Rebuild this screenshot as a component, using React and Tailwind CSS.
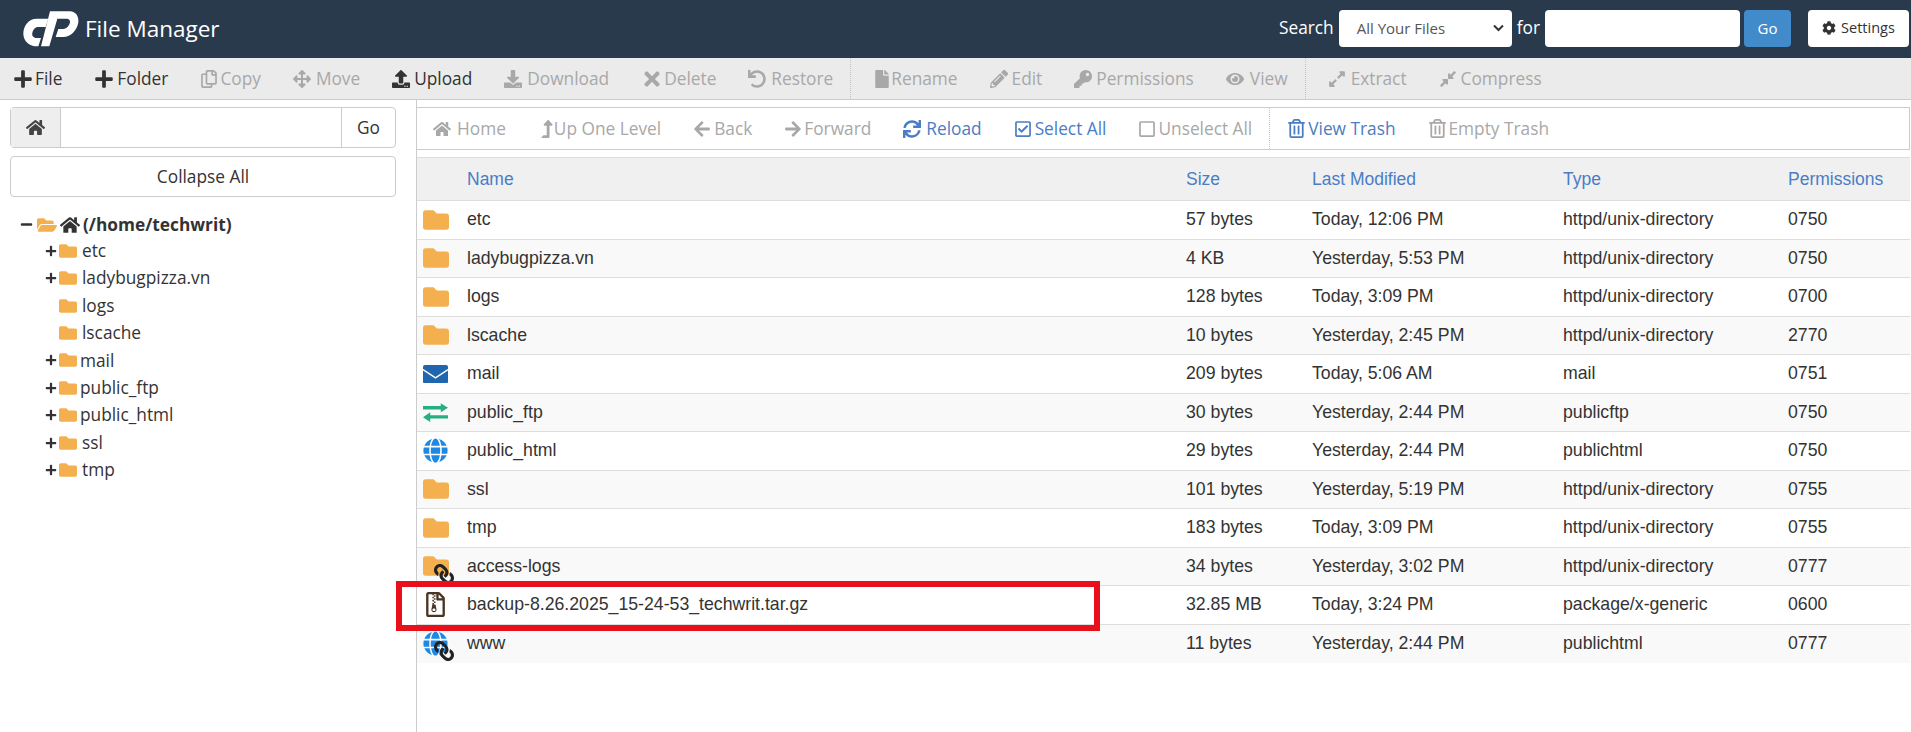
import {
    FaPlus,
    FaRegCopy,
    FaArrowsAlt,
    FaUpload,
    FaDownload,
    FaTimes,
    FaUndo,
    FaFile,
    FaPencilAlt,
    FaKey,
    FaEye,
    FaExpandAlt,
    FaCompressAlt,
    FaHome,
    FaLevelUpAlt,
    FaArrowLeft,
    FaArrowRight,
    FaSync,
    FaRegCheckSquare,
    FaRegSquare,
    FaRegTrashAlt,
    FaCog,
    FaFolder,
    FaFolderOpen,
    FaMinus,
    FaGlobe,
    FaLink,
    FaRegFileArchive,
} from "react-icons/fa"

const topTools = [
    {
        lead: "pl-[13px]",
        items: [
            { icon: FaPlus, h: "h-[20px]", label: "File", on: true },
            { icon: FaPlus, h: "h-[20px]", label: "Folder", on: true, slot: "w-[23px]" },
            { icon: FaRegCopy, label: "Copy", slot: "w-[20px]" },
            { icon: FaArrowsAlt, label: "Move", slot: "w-[23px]" },
            { icon: FaUpload, label: "Upload", on: true },
            { icon: FaDownload, label: "Download", slot: "w-[23px]" },
            { icon: FaTimes, h: "h-[22px]", label: "Delete", slot: "w-[23px]" },
            { icon: FaUndo, label: "Restore", slot: "w-[23px]" },
        ],
    },
    {
        lead: "pl-[22px]",
        items: [
            { icon: FaFile, label: "Rename", slot: "w-[18px]" },
            { icon: FaPencilAlt, label: "Edit" },
            { icon: FaKey, label: "Permissions" },
            { icon: FaEye, h: "h-[18px]", label: "View", slot: "w-[24px]" },
        ],
    },
    {
        lead: "pl-[22px]",
        items: [
            { icon: FaExpandAlt, label: "Extract", slot: "w-[23px]" },
            { icon: FaCompressAlt, label: "Compress" },
        ],
    },
]

const navTools = [
    {
        lead: "pl-[16px]",
        items: [
            { icon: FaHome, label: "Home", slot: "w-[24px]" },
            { icon: FaLevelUpAlt, label: "Up One Level", slot: "w-[16px]" },
            { icon: FaArrowLeft, label: "Back", slot: "w-[21px]" },
            { icon: FaArrowRight, label: "Forward", slot: "w-[20px]" },
            { icon: FaSync, label: "Reload", blue: true, slot: "w-[23px]" },
            { icon: FaRegCheckSquare, label: "Select All", blue: true, slot: "w-[21px]" },
            { icon: FaRegSquare, label: "Unselect All", slot: "w-[20px]" },
        ],
    },
    {
        lead: "pl-[17px]",
        items: [
            { icon: FaRegTrashAlt, h: "h-[19px]", label: "View Trash", blue: true, slot: "w-[21px]" },
            { icon: FaRegTrashAlt, h: "h-[19px]", label: "Empty Trash", slot: "w-[21px]" },
        ],
    },
]

const tree = [
    { name: "etc", plus: true },
    { name: "ladybugpizza.vn", plus: true },
    { name: "logs" },
    { name: "lscache" },
    { name: "mail", plus: true, tight: true },
    { name: "public_ftp", plus: true, tight: true },
    { name: "public_html", plus: true, tight: true },
    { name: "ssl", plus: true },
    { name: "tmp", plus: true },
]

const files = [
    { name: "etc", size: "57 bytes", date: "Today, 12:06 PM", type: "httpd/unix-directory", perm: "0750", kind: "folder" },
    { name: "ladybugpizza.vn", size: "4 KB", date: "Yesterday, 5:53 PM", type: "httpd/unix-directory", perm: "0750", kind: "folder" },
    { name: "logs", size: "128 bytes", date: "Today, 3:09 PM", type: "httpd/unix-directory", perm: "0700", kind: "folder" },
    { name: "lscache", size: "10 bytes", date: "Yesterday, 2:45 PM", type: "httpd/unix-directory", perm: "2770", kind: "folder" },
    { name: "mail", size: "209 bytes", date: "Today, 5:06 AM", type: "mail", perm: "0751", kind: "mail" },
    { name: "public_ftp", size: "30 bytes", date: "Yesterday, 2:44 PM", type: "publicftp", perm: "0750", kind: "ftp" },
    { name: "public_html", size: "29 bytes", date: "Yesterday, 2:44 PM", type: "publichtml", perm: "0750", kind: "globe" },
    { name: "ssl", size: "101 bytes", date: "Yesterday, 5:19 PM", type: "httpd/unix-directory", perm: "0755", kind: "folder" },
    { name: "tmp", size: "183 bytes", date: "Today, 3:09 PM", type: "httpd/unix-directory", perm: "0755", kind: "folder" },
    { name: "access-logs", size: "34 bytes", date: "Yesterday, 3:02 PM", type: "httpd/unix-directory", perm: "0777", kind: "folder", link: true },
    { name: "backup-8.26.2025_15-24-53_techwrit.tar.gz", size: "32.85 MB", date: "Today, 3:24 PM", type: "package/x-generic", perm: "0600", kind: "archive" },
    { name: "www", size: "11 bytes", date: "Yesterday, 2:44 PM", type: "publichtml", perm: "0777", kind: "globe", link: true },
]

function Logo() {
    return (
        <svg width="56" height="36" viewBox="24 24 168 108" className="shrink-0">
            <path
                fill="#fff"
                d="M100 47 L65 47 C40 47 25 70 25 92 C25 115 45 130 65 130 L70 130 L78 105 L65 105 C55 105 50 98 52 90 C54 80 60 72 70 72 L92 72 Z"
            />
            <path
                fill="#fff"
                d="M105 25 L165 25 C182 25 192 40 190 58 C186 85 165 102 145 102 L122 102 L130 78 L145 78 C155 78 163 68 165 58 C166 50 160 47 155 47 L127 47 L103 130 L78 130 Z"
            />
        </svg>
    )
}

function ToolGroup({ group, first }) {
    const border = first ? "" : "border-l border-dotted border-[#c4c4c4]"
    return (
        <div className={`flex items-center h-full gap-[32px] pr-[17px] ${group.lead} ${border}`}>
            {group.items.map((item) => {
                const Icon = item.icon
                let color = "text-[#a8a8a8]"
                if (item.on) color = "text-[#333]"
                if (item.blue) color = "text-[#4a7dc4]"
                return (
                    <div key={item.label} className={`flex items-center ${color}`}>
                        <div className={`${item.slot || "w-[22px]"} shrink-0`}>
                            <Icon className={`w-auto ${item.h || "h-[18px]"}`} />
                        </div>
                        <span>{item.label}</span>
                    </div>
                )
            })}
        </div>
    )
}

function RowIcon({ kind, link }) {
    return (
        <div className="relative w-[26px] h-[25px] flex items-center">
            {kind === "folder" && <FaFolder size={26} className="text-[#f4b04f]" />}
            {kind === "mail" && (
                <svg width="25" height="18.5" viewBox="0 0 25 18.5">
                    <rect width="25" height="18.5" rx="2" fill="#1f66ae" />
                    <path d="M0 4.5 L12.5 12.8 L25 4.5" fill="none" stroke="#fff" strokeWidth="1.5" />
                </svg>
            )}
            {kind === "ftp" && (
                <svg width="25" height="19" viewBox="0 0 76 57" fill="#27ae82">
                    <path d="M0 9 H54 V0 L76 14 L54 28 V19 H0 Z" />
                    <path d="M76 37 H22 V28 L0 43 L22 57 V47 H76 Z" />
                </svg>
            )}
            {kind === "globe" && <FaGlobe size={25} className="text-[#1e88e5]" />}
            {kind === "archive" && <FaRegFileArchive className="w-auto h-[25px] text-[#4a3423]" />}
            {link && (
                <div className="absolute right-[-5px] bottom-[-5px]">
                    <FaLink size={20} className="text-[#222] -scale-x-100" />
                </div>
            )}
        </div>
    )
}

function App() {
    return (
        <div className="relative h-screen overflow-hidden bg-white font-['Open_Sans',sans-serif] text-[17.3px] text-[#333]">
            <header className="h-[58px] bg-[#2a3a4d] flex items-center pl-[23px] pr-[2px]">
                <Logo />
                <h1 className="ml-[6px] text-[22.5px] text-white">File Manager</h1>

                <div className="ml-auto mb-[2px] flex items-center text-white">
                    <span className="mr-[5px]">Search</span>
                    <div className="w-[173px] h-[37px] bg-white rounded flex items-center justify-between pl-[18px] pr-[8px] text-[#555] text-[15px]">
                        <span>All Your Files</span>
                        <svg width="11" height="8" viewBox="0 0 11 8" fill="none" stroke="#333" strokeWidth="2">
                            <path d="M1 1.5 L5.5 6 L10 1.5" />
                        </svg>
                    </div>
                    <span className="mx-[5px]">for</span>
                    <div className="w-[195px] h-[37px] bg-white rounded" />
                    <div className="ml-[4px] w-[47px] h-[37px] bg-[#428bca] rounded-sm flex items-center justify-center text-[15px]">
                        Go
                    </div>
                    <div className="ml-[17px] w-[101px] h-[37px] bg-white rounded-sm flex items-center justify-center gap-[5px] text-[#333] text-[14.5px]">
                        <FaCog size={14} />
                        Settings
                    </div>
                </div>
            </header>

            <div className="h-[42px] bg-[#ebebeb] border-b border-[#ccc] flex items-center">
                {topTools.map((group, i) => (
                    <ToolGroup key={i} group={group} first={i === 0} />
                ))}
            </div>

            <main className="flex h-[632px]">
                <aside className="w-[416px] shrink-0 pl-[10px] pr-[20px] pt-[7px]">
                    <div className="h-[41px] flex border border-[#ccc] rounded-sm">
                        <div className="w-[50px] bg-[#eee] border-r border-[#ccc] flex items-center justify-center">
                            <FaHome size={19} className="text-[#444]" />
                        </div>
                        <div className="flex-1" />
                        <div className="w-[54px] border-l border-[#ccc] flex items-center justify-center">Go</div>
                    </div>
                    <div className="mt-[8px] h-[41px] border border-[#ccc] rounded-sm flex items-center justify-center">
                        Collapse All
                    </div>

                    <div className="mt-[15px] pl-[10px]">
                        <div className="h-[25px] flex items-center font-bold">
                            <FaMinus className="w-auto h-[13px] text-[#333]" />
                            <FaFolderOpen className="w-auto h-[20px] ml-[4px] text-[#f4b04f]" />
                            <FaHome className="w-auto h-[20px] ml-[3px] text-[#333]" />
                            <span className="ml-[3px]">(/home/techwrit)</span>
                        </div>
                        {tree.map((item) => (
                            <div key={item.name} className="h-[27.45px] flex items-center pl-[25px]">
                                <div className="w-[11px]">{item.plus && <FaPlus size={12} />}</div>
                                <FaFolder size={18} className="ml-[3px] text-[#f4b04f]" />
                                <span className={item.tight ? "ml-[3px]" : "ml-[5px]"}>{item.name}</span>
                            </div>
                        ))}
                    </div>
                </aside>

                <section className="flex-1 border-l border-[#ccc] pr-[1px] pt-[7px] font-['Liberation_Sans',sans-serif] text-[17.7px]">
                    <div className="h-[43px] flex items-center border border-l-0 border-[#ccc] font-['Open_Sans',sans-serif] text-[17.3px]">
                        {navTools.map((group, i) => (
                            <ToolGroup key={i} group={group} first={i === 0} />
                        ))}
                    </div>

                    <div className="mt-[7px] h-[44px] grid grid-cols-[50px_719px_126px_251px_225px_1fr] items-center bg-[#f0f0f1] border-y border-[#ddd] text-[#4a7dc4] text-[17.5px]">
                        <div />
                        <div>Name</div>
                        <div>Size</div>
                        <div>Last Modified</div>
                        <div>Type</div>
                        <div>Permissions</div>
                    </div>

                    {files.map((file, i) => (
                        <div
                            key={file.name}
                            className={
                                i % 2 === 1
                                    ? "h-[38.5px] grid grid-cols-[50px_719px_126px_251px_225px_1fr] items-center bg-[#f9f9f9] border-b border-[#ddd] last:border-b-0"
                                    : "h-[38.5px] grid grid-cols-[50px_719px_126px_251px_225px_1fr] items-center border-b border-[#ddd]"
                            }
                        >
                            <div className="pl-[6px]">
                                <RowIcon kind={file.kind} link={file.link} />
                            </div>
                            <div>{file.name}</div>
                            <div>{file.size}</div>
                            <div>{file.date}</div>
                            <div>{file.type}</div>
                            <div>{file.perm}</div>
                        </div>
                    ))}
                </section>
            </main>

            <div className="absolute left-[396px] top-[581px] w-[704px] h-[50px] border-[6px] border-[#e8101a] pointer-events-none" />
        </div>
    )
}

export default App
